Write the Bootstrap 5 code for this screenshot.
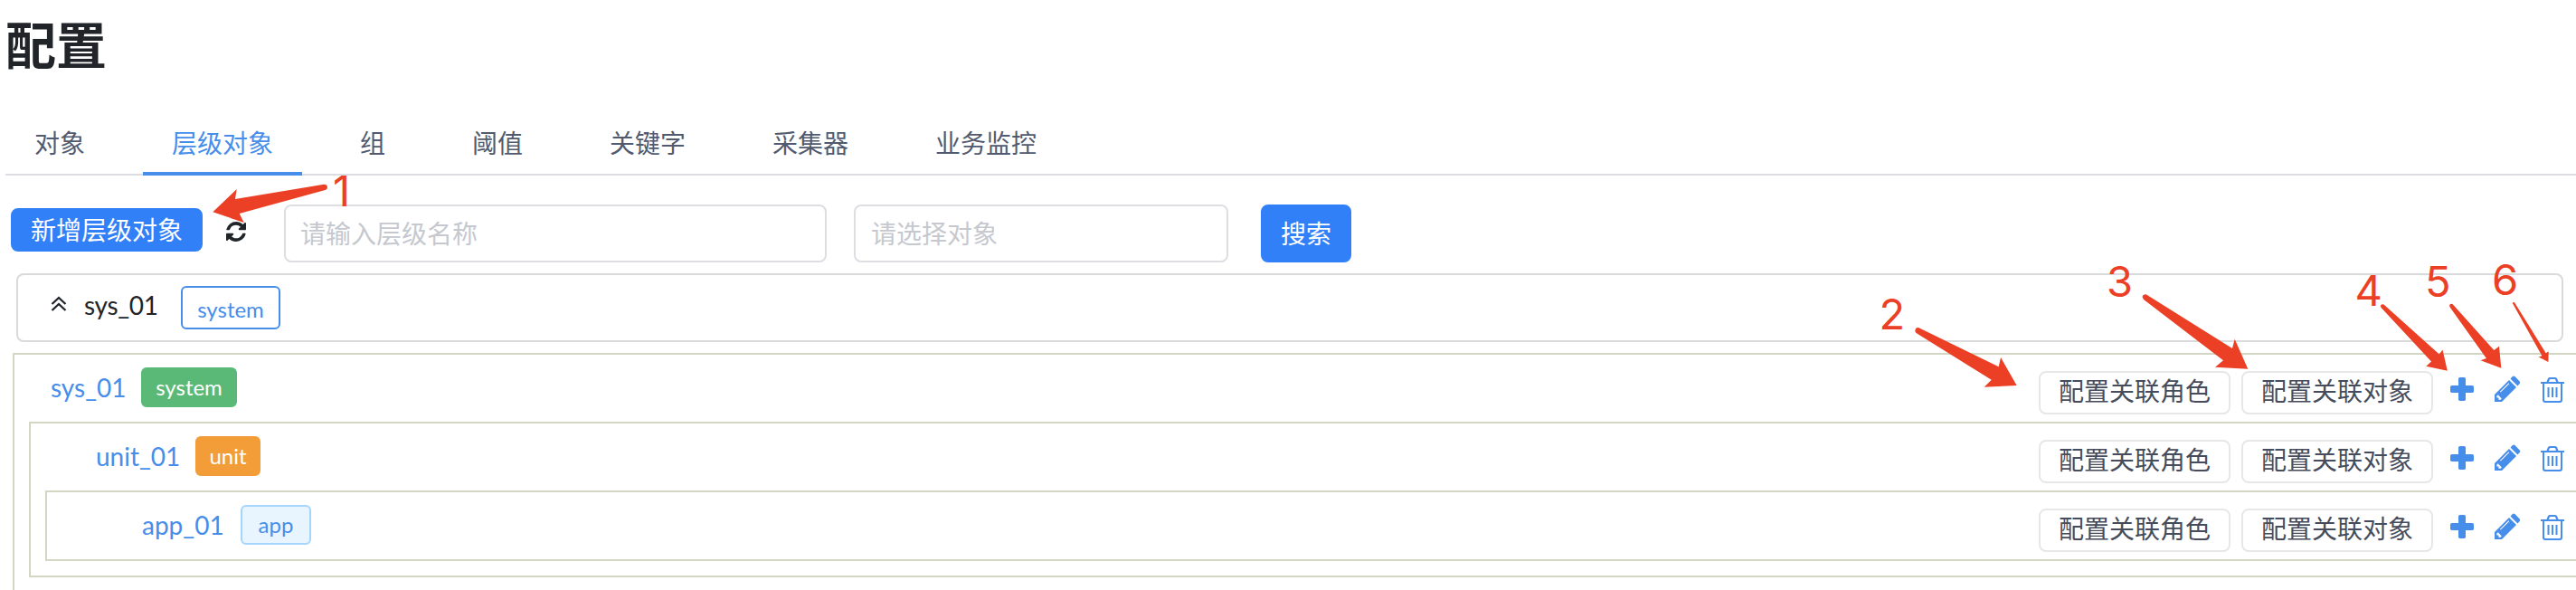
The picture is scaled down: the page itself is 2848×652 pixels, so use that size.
<!DOCTYPE html>
<html lang="zh-CN">
<head>
<meta charset="utf-8">
<title>配置</title>
<link rel="stylesheet" href="https://cdn.jsdelivr.net/npm/bootstrap@5.3.0/dist/css/bootstrap.min.css">
<style>
html,body{width:2848px;height:652px;overflow:hidden;background:#fff}
body{font-family:Lato,"Noto Sans CJK SC",sans-serif;font-size:28px;line-height:40px;color:#212529;position:relative}
h1{font-size:56px;line-height:64px;font-weight:700;margin:0;padding:18px 0 0 6px;height:122px;color:#212529}
.cfg-tabs{height:72px;margin-left:6px;gap:32px;border-bottom:2px solid #dcdde2}
.cfg-tabs .nav-link{height:72px;padding:16px 32px 0;line-height:40px;color:#515a6e;border-radius:0;border-bottom:4px solid transparent}
.cfg-tabs .nav-link.active{color:#478dea;border-bottom-color:#478dea}
.btn{font-size:28px;padding:0 20px;border-width:2px;border-radius:8px;white-space:nowrap;line-height:40px}
.btn-primary{--bs-btn-bg:#3280f8;--bs-btn-border-color:#3280f8}
.toolbar{height:64px;margin:32px 0 12px 12px}
.btn-add{width:212px;height:48px;margin-top:4px}
.refresh{width:22px;height:22px;margin:19px 42px 0 26px}
.form-control{height:64px;border:2px solid #dcdee2;border-radius:8px;font-size:28px;padding:0 16px;line-height:40px}
.form-control::placeholder{color:#c5c8ce;opacity:1}
.in-name{width:600px;margin-right:30px}
.in-obj{width:414px;margin-right:36px;padding-left:17px}
.btn-search{width:100px;height:64px}
.panel{height:76px;width:2816px;margin-left:18px;border:2px solid #d9dadc;border-radius:8px;padding-left:36px}
.panel svg{width:18px;height:18px;margin:23px 19px 0 0}
.panel .nm{width:107px;line-height:34px;margin-top:16px;letter-spacing:-.3px}
.tag{display:inline-block;height:44px;border-radius:6px;font-size:24px;line-height:40px;padding:0 14px;border:2px solid;text-align:center;font-weight:400}
.tag-line{width:110px;height:48px;margin-top:12px;color:#478dea;border-color:#478dea;line-height:47px}
.tag-system{width:106px;background:#5ab976;border-color:#5ab976;color:#fff}
.tag-unit{width:72px;background:#f29d38;border-color:#f29d38;color:#fff;padding:0}
.tag-app{width:78px;background:#e8f5fe;border-color:#a3d6fa;color:#478dea;padding:0}
.level{border:2px solid #d4d6c4;border-right:0}
.level .level{margin-left:16px}
.lv1{margin:12px 0 0 14px;height:280px}
.lv2{height:172px}
.lv3{height:78px}
.line{height:74px;padding-top:14px}
.line a,.line a:hover{color:#478dea;text-decoration:none;line-height:40px;margin-top:2px;font-weight:400;white-space:nowrap}
.lv1>.line a{width:100px;margin-left:40px}
.lv2>.line a{width:110px;margin-left:72px}
.lv3>.line a{width:109px;margin-left:105px}
.ops{margin-left:auto;padding:4px 12px 0 0}
.ops .btn{width:212px;height:48px;border-color:#e6e7e9;color:#464c5b;background:#fff;line-height:38px;padding:0 20px 4px}
.ops .btn+.btn{margin-left:12px}
.ops svg{width:30px;height:30px;fill:#478dea}
.ops .plus{margin:5px 20px 0 17px}
.ops .pen{margin:5px 21px 0 0}
.ops .bin{margin:6px 0 0;width:28px}
.notes{position:absolute;left:0;top:0;width:2848px;height:652px;fill:#eb4025;font-family:Inter,"Liberation Sans",sans-serif;font-size:47px;pointer-events:none}
</style>
</head>
<body>
<svg class="d-none">
<symbol id="i-plus" viewBox="0 0 30 30"><rect x="2" y="11" width="26" height="8" rx="1.8"/><rect x="11" y="2" width="8" height="26" rx="1.8"/></symbol>
<symbol id="i-pen" viewBox="0 0 30 30"><path fill-rule="evenodd" d="M1 29V21L17 5l8 8L9 29zM3.400 22.500v2.100H5.400v2.100h2.200L8.800 25.400 4.700 21.300zM16.600 8.200 7 17.800l.7.700 9.600-9.600zM18.500 3.500 20.900 1.100q1.200-1 2.500 0l5.300 5.300q1.100 1.200 0 2.500L26.400 11.400z"/></symbol>
<symbol id="i-bin" viewBox="0 0 28 30"><path fill-rule="evenodd" d="M1 6h6.500l1.300-3.500Q9.400 1 11 1h6q1.600 0 2.200 1.500L20.500 6H27v2H25v18q0 3-3 3H6q-3 0-3-3V8H1zM9.900 6h8.200L17.200 3.500q-.2-.5-.8-.5h-4.800q-.6 0-.8.500zM5 8v17.500Q5 27 6.500 27h15q1.500 0 1.500-1.500V8zM8.500 12h2v11h-2zM13 12h2v11h-2zM17.500 12h2v11h-2z"/></symbol>
</svg>
<h1>配置</h1>
<ul class="nav cfg-tabs flex-nowrap">
<li class="nav-item"><a class="nav-link" href="#">对象</a></li>
<li class="nav-item"><a class="nav-link active" href="#">层级对象</a></li>
<li class="nav-item"><a class="nav-link" href="#">组</a></li>
<li class="nav-item"><a class="nav-link" href="#">阈值</a></li>
<li class="nav-item"><a class="nav-link" href="#">关键字</a></li>
<li class="nav-item"><a class="nav-link" href="#">采集器</a></li>
<li class="nav-item"><a class="nav-link" href="#">业务监控</a></li>
</ul>
<div class="toolbar d-flex align-items-start">
<button class="btn btn-primary btn-add">新增层级对象</button>
<svg class="refresh" viewBox="0 0 1536 1536" fill="#212529"><path d="M1511 928q0 5-1 7-64 268-268 434.500T764 1536q-146 0-282.500-55T238 1324l-129 129q-19 19-45 19t-45-19-19-45V960q0-26 19-45t45-19h448q26 0 45 19t19 45-19 45l-137 137q71 66 161 102t187 36q134 0 250-65t186-179q11-17 53-117 8-23 30-23h192q13 0 22.500 9.500t9.500 22.500zm25-800v448q0 26-19 45t-45 19h-448q-26 0-45-19t-19-45 19-45l138-138Q969 256 768 256q-134 0-250 65T332 500q-11 17-53 117-8 23-30 23H50q-13 0-22.500-9.500T18 608v-7q65-268 270-434.500T768 0q146 0 284 55.500T1297 212l130-129q19-19 45-19t45 19 19 45z"/></svg>
<input class="form-control in-name" placeholder="请输入层级名称">
<input class="form-control in-obj" placeholder="请选择对象">
<button class="btn btn-primary btn-search">搜索</button>
</div>
<div class="panel d-flex align-items-start">
<svg viewBox="0 0 18 18" fill="none" stroke="#212529" stroke-width="2.300"><path d="M1.500 9 9 2l7.500 7M1.500 16 9 9l7.500 7"/></svg>
<span class="nm">sys_01</span><span class="tag tag-line">system</span>
</div>
<div class="level lv1">
<div class="line d-flex align-items-start"><a href="#">sys_01</a><span class="tag tag-system">system</span>
<div class="ops d-flex align-items-start"><button class="btn">配置关联角色</button><button class="btn">配置关联对象</button><svg class="plus"><use href="#i-plus"/></svg><svg class="pen"><use href="#i-pen"/></svg><svg class="bin"><use href="#i-bin"/></svg></div></div>
<div class="level lv2">
<div class="line d-flex align-items-start"><a href="#">unit_01</a><span class="tag tag-unit">unit</span>
<div class="ops d-flex align-items-start"><button class="btn">配置关联角色</button><button class="btn">配置关联对象</button><svg class="plus"><use href="#i-plus"/></svg><svg class="pen"><use href="#i-pen"/></svg><svg class="bin"><use href="#i-bin"/></svg></div></div>
<div class="level lv3">
<div class="line d-flex align-items-start"><a href="#">app_01</a><span class="tag tag-app">app</span>
<div class="ops d-flex align-items-start"><button class="btn">配置关联角色</button><button class="btn">配置关联对象</button><svg class="plus"><use href="#i-plus"/></svg><svg class="pen"><use href="#i-pen"/></svg><svg class="bin"><use href="#i-bin"/></svg></div></div>
</div>
</div>
</div>
<svg class="notes" viewBox="0 0 2848 652">
<path d="M235.300 234.300 261.700 209 260 220 358 203.700Q361.500 203.500 362 207 362 209.500 359.500 210L264.700 236 269.700 246Z"/>
<path d="M2117.300 366Q2117.500 361.500 2121 362L2209.700 405.300 2212 395 2229.700 426 2193.700 427.700 2201.700 419.700 2118.500 368Z"/>
<path d="M2368.500 328Q2369.500 324.500 2373 325.500L2468 385 2470.700 374.700 2485.300 407.700 2449 405.700 2458 398.300 2370 331Z"/>
<path d="M2631.800 338Q2632.500 335.500 2635.500 336.500L2696.800 391.500 2700.500 386.500 2705.800 409.700 2682.300 404.700 2688 399.600 2632.600 340Z"/>
<path d="M2708 338Q2708.500 335 2711.500 336L2757.300 387 2763 382.800 2765.300 406.700 2742.500 398.200 2748.900 395.900 2709 340Z"/>
<path d="M2777.800 335Q2778.500 333.500 2780 334.300L2814.700 390.200 2817.700 388.200 2817.400 399.900 2806.700 394.600 2810.400 393.200Z"/>
<text x="368" y="228">1</text><text x="2077.500" y="364">2</text><text x="2329" y="328">3</text><text x="2603.500" y="338">4</text><text x="2681" y="328">5</text><text x="2755" y="326">6</text>
</svg>
<script src="https://cdn.jsdelivr.net/npm/bootstrap@5.3.0/dist/js/bootstrap.bundle.min.js"></script>
</body>
</html>
